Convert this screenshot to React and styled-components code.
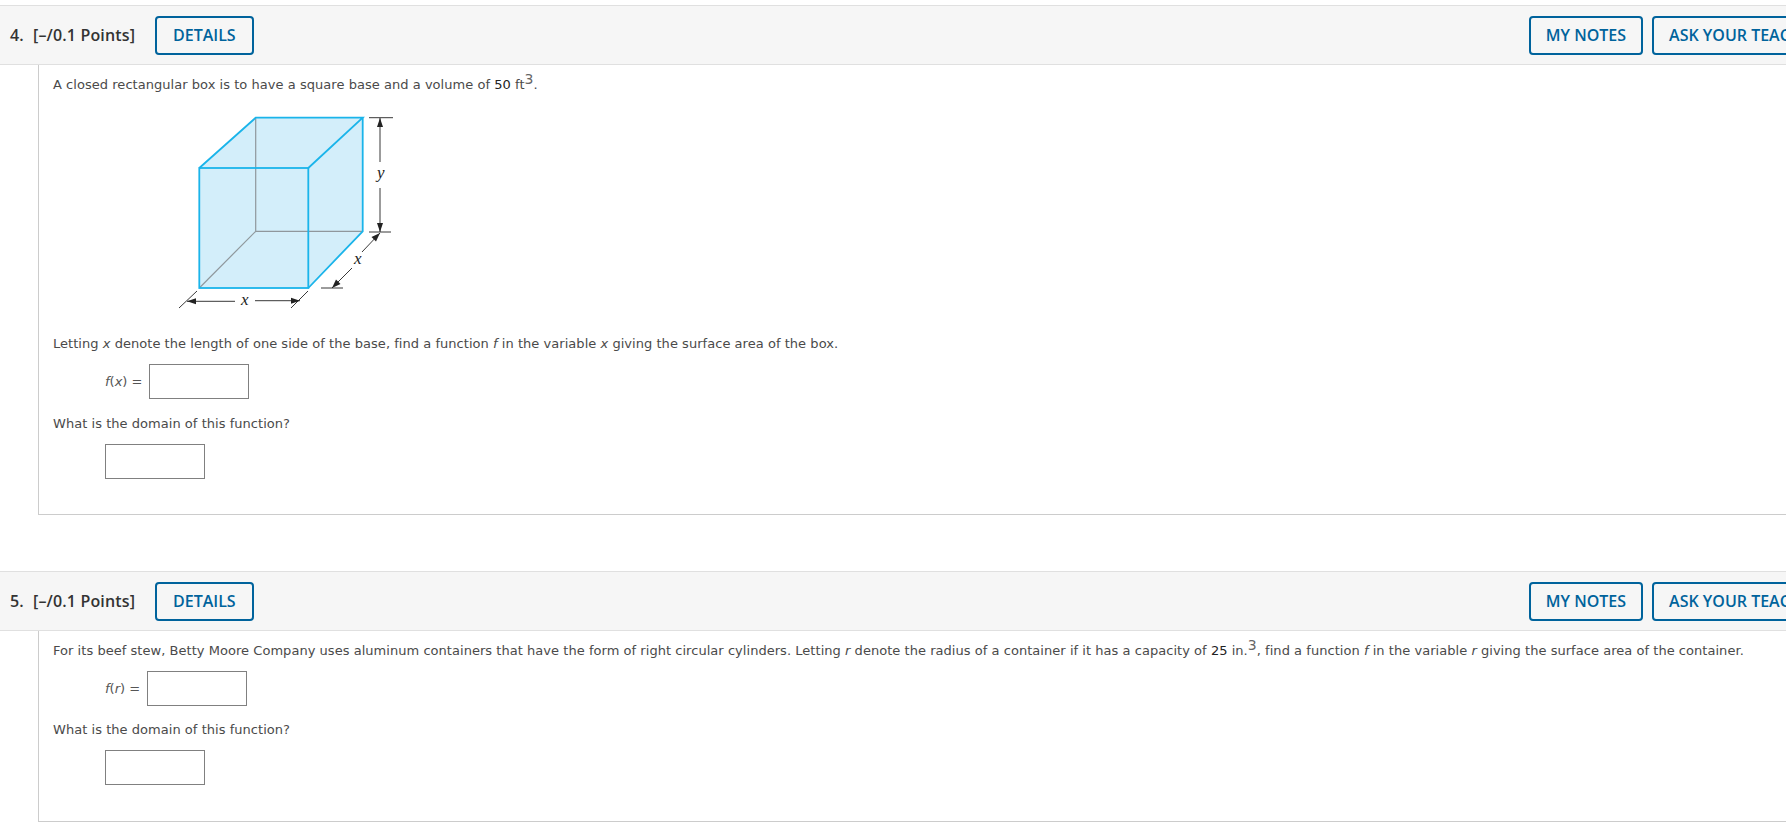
import React from 'react';
import styled, { createGlobalStyle } from 'styled-components';

const GlobalStyle = createGlobalStyle`
  html, body {
    margin: 0;
    padding: 0;
    background: #fff;
    overflow: hidden;
  }
`;

const BoxFigure = () => (
  <Figure width="260" height="220" viewBox="0 0 260 220">
    <polygon points="39.3,68 95.7,17.7 202.7,17.7 202.7,131.3 148.3,188 39.3,188" fill="#d3eefa" />
    <g stroke="#8f979c" strokeWidth="1.2" fill="none">
      <path d="M95.7 17.7V131.3H202.7" />
      <path d="M95.7 131.3L39.3 188" />
    </g>
    <g stroke="#1ab4ea" strokeWidth="1.8" fill="none">
      <rect x="39.3" y="68" width="109" height="120" />
      <path d="M39.3 68L95.7 17.7H202.7L148.3 68" />
      <path d="M202.7 17.7V131.3L148.3 188" />
    </g>
    <g stroke="#222" strokeWidth="0.9" fill="none">
      <path d="M209 17.7H233M209 132H231M220 18V62M220 88V132" />
      <path d="M220 133L202 152M192 168L172 188M161 188H183" />
      <path d="M19 208L37 191M131 208L148 191M27 201.3H75M95 200.7H140" />
    </g>
    <g fill="#222">
      <path d="M220 18L217 27H223Z" />
      <path d="M220 132L217 123H223Z" />
      <path d="M220 133L211.5 137L216 141.5Z" />
      <path d="M172 188L180.5 184L176 179.5Z" />
      <path d="M27 201.3L36 198.3V204.3Z" />
      <path d="M140 200.7L131 197.7V203.7Z" />
    </g>
    <Label x="217" y="78">y</Label>
    <Label x="194" y="164">x</Label>
    <Label x="81" y="205">x</Label>
  </Figure>
);

const Question = ({ number, figure, lead, arg, domainGap, bottomSpace }) => (
  <QuestionBlock>
    <Header>
      <Title>
        <Num>{number}.</Num>[–/0.1 Points]
      </Title>
      <DetailsButton>DETAILS</DetailsButton>
      <Actions>
        <Button>MY NOTES</Button>
        <Button>ASK YOUR TEACHER</Button>
      </Actions>
    </Header>
    <Body $bottom={bottomSpace}>
      <Text>{lead}</Text>
      {figure}
      {figure && (
        <FollowText $gap={15}>
          Letting <i>x</i> denote the length of one side of the base, find a function <i>f</i> in
          the variable <i>x</i> giving the surface area of the box.
        </FollowText>
      )}
      <AnswerRow>
        <Formula>
          <i>f</i>(<i>{arg}</i>) =
        </Formula>
        <Input />
      </AnswerRow>
      <FollowText $gap={domainGap}>What is the domain of this function?</FollowText>
      <AnswerRow>
        <Input />
      </AnswerRow>
    </Body>
  </QuestionBlock>
);

export default function App() {
  return (
    <Page>
      <GlobalStyle />
      <Question
        number={4}
        figure={<BoxFigure />}
        arg="x"
        domainGap={16}
        bottomSpace={35}
        lead={
          <>
            A closed rectangular box is to have a square base and a volume of <Val>50</Val> ft
            <Sup>3</Sup>.
          </>
        }
      />
      <Question
        number={5}
        arg="r"
        domainGap={15}
        bottomSpace={36}
        lead={
          <>
            For its beef stew, Betty Moore Company uses aluminum containers that have the form of
            right circular cylinders. Letting <i>r</i> denote the radius of a container if it has a
            capacity of <Val>25</Val> in.<Sup>3</Sup>, find a function <i>f</i> in the variable{' '}
            <i>r</i> giving the surface area of the container.
          </>
        }
      />
    </Page>
  );
}

const Page = styled.div`
  width: 1848px;
  height: 824px;
  padding-top: 5px;
  box-sizing: border-box;
  overflow: hidden;
  font-family: 'DejaVu Sans', Verdana, sans-serif;
`;

const QuestionBlock = styled.section`
  margin-bottom: 56px;
`;

const Header = styled.header`
  display: flex;
  align-items: center;
  height: 60px;
  box-sizing: border-box;
  padding: 0 10px;
  background: #f6f6f6;
  border-top: 1px solid #e0e0e0;
  border-bottom: 1px solid #e0e0e0;
`;

const Title = styled.h2`
  margin: 0;
  width: 145px;
  font-family: 'Open Sans', sans-serif;
  font-size: 16px;
  font-weight: 600;
  letter-spacing: 0.15px;
  color: #333;
  white-space: nowrap;
`;

const Num = styled.span`
  display: inline-block;
  width: 23px;
`;

const Actions = styled.div`
  display: flex;
  gap: 9px;
  margin-left: auto;
`;

const Button = styled.button`
  height: 39px;
  padding: 0 15px;
  background: transparent;
  border: 2px solid #00639c;
  border-radius: 4px;
  color: #00639c;
  font-family: 'Open Sans', sans-serif;
  font-size: 16px;
  font-weight: 600;
  white-space: nowrap;
`;

const DetailsButton = styled(Button)`
  padding: 0 16px;
`;

const Body = styled.div`
  margin-left: 38px;
  padding: 11px 0 ${p => p.$bottom}px 14px;
  border-left: 1px solid #ccc;
  border-bottom: 1px solid #ccc;
`;

const Text = styled.p`
  margin: 0;
  font-size: 13px;
  line-height: 18px;
  letter-spacing: 0.04px;
  color: #4a4a4a;
  white-space: nowrap;
`;

const FollowText = styled(Text)`
  margin-top: ${p => p.$gap}px;
`;

const Val = styled.span`
  color: #222;
`;

const Sup = styled.sup`
  font-size: 14px;
  line-height: 0;
  vertical-align: 5px;
  color: #666;
`;

const Figure = styled.svg`
  display: block;
  margin: 6px 0 0 107px;
`;

const Label = styled.text`
  font-family: 'Liberation Serif', serif;
  font-style: italic;
  font-size: 17px;
  fill: #222;
`;

const AnswerRow = styled.div`
  display: flex;
  align-items: center;
  margin-top: 11px;
  padding-left: 52px;
`;

const Formula = styled.span`
  margin-right: 7px;
  font-size: 13px;
  color: #555;
  white-space: nowrap;
`;

const Input = styled.div`
  width: 100px;
  height: 35px;
  box-sizing: border-box;
  background: #fff;
  border: 1px solid #808080;
`;
